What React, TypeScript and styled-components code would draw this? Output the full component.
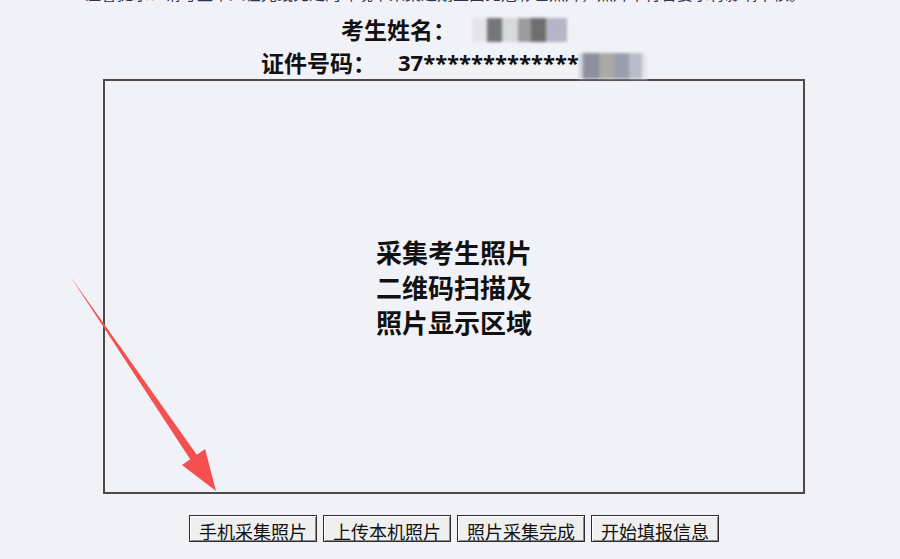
import React from "react";
import styled, { createGlobalStyle } from "styled-components";

const Global = createGlobalStyle`
  html, body { margin: 0; padding: 0; background: #f1f2f8; overflow: hidden; }
  body { font-family: "Noto Sans CJK SC", "Noto Sans", sans-serif; }
`;

const Page = styled.div`
  position: relative;
  box-sizing: border-box;
  width: 900px;
  height: 559px;
  padding-left: 8px;
  display: flex;
  flex-direction: column;
  align-items: center;
`;

const Notice = styled.div`
  margin-top: -25px;
  height: 38px;
  line-height: 36px;
  font-size: 16px;
  color: #2b3550;
  white-space: nowrap;
  margin-right: 18px;
`;

const InfoLine = styled.div`
  height: 33px;
  line-height: 33px;
  font-size: 23px;
  font-weight: 700;
  color: #111;
  display: flex;
  align-items: center;
  white-space: nowrap;
`;

const Label = styled.span<{ $gap?: number }>`
  margin-right: ${(p) => p.$gap ?? 0}px;
`;

const Digits = styled.span`
  font-family: "Open Sans", "Noto Sans", sans-serif;
  font-size: 22px;
  font-weight: 700;
`;

const Blur = styled.span<{ $w: number; $h: number; $bg: string; $dy?: number }>`
  display: inline-block;
  width: ${(p) => p.$w}px;
  height: ${(p) => p.$h}px;
  background: ${(p) => p.$bg};
  filter: blur(1.6px);
  transform: translateY(${(p) => p.$dy ?? 0}px);
`;

const PhotoArea = styled.div`
  box-sizing: border-box;
  width: 702px;
  height: 415px;
  border: 2px solid #4b4b4d;
  display: flex;
  align-items: center;
  justify-content: center;
  text-align: center;
  font-size: 26px;
  font-weight: 700;
  line-height: 35px;
  color: #111;
`;

const ButtonRow = styled.div`
  margin-top: 21px;
  display: flex;
  gap: 6px;
`;

const Button = styled.button`
  box-sizing: border-box;
  width: 128px;
  height: 27px;
  padding: 4px 0 0;
  font-family: "Noto Sans CJK SC", sans-serif;
  font-size: 18px;
  line-height: 20px;
  color: #111;
  background: #efefef;
  border: 1px solid #2e2e2e;
  box-shadow: inset 1px 1px 0 #ffffff, inset -1px -1px 0 #8a8a8a;
`;

const ArrowSvg = styled.svg`
  position: absolute;
  left: 0;
  top: 0;
  pointer-events: none;
`;

const nameBlur =
  "linear-gradient(90deg, #e4e4ea 0 16%, #75767a 16% 32%, #d8d9de 32% 48%, #9c9ba0 48% 62%, #6f6d6e 62% 78%, #b2b6c6 78% 100%)";
const idBlur =
  "linear-gradient(90deg, #d2d3da 0 6%, #8b8f9e 6% 30%, #aaa9a5 30% 52%, #999eac 52% 74%, #b9bcc8 74% 92%, #e5e6ec 92% 100%)";

export default function App() {
  return (
    <>
      <Global />
      <Page>
        <Notice>
          温馨提示：请考生本人在光线充足的环境下采集近期正面免冠彩色照片，照片不符合要求将影响审核。
        </Notice>
        <InfoLine>
          <Label $gap={16}>考生姓名：</Label>
          <Blur $w={95} $h={24} $bg={nameBlur} />
        </InfoLine>
        <InfoLine>
          <Label $gap={22}>证件号码：</Label>
          <Digits>37*************</Digits>
          <Blur $w={68} $h={26} $bg={idBlur} $dy={3} />
        </InfoLine>
        <PhotoArea>
          采集考生照片
          <br />
          二维码扫描及
          <br />
          照片显示区域
        </PhotoArea>
        <ButtonRow>
          <Button>手机采集照片</Button>
          <Button>上传本机照片</Button>
          <Button>照片采集完成</Button>
          <Button>开始填报信息</Button>
        </ButtonRow>
        <ArrowSvg width="900" height="559" viewBox="0 0 900 559">
          <polygon
            points="70,276 196.8,454.8 205.1,449.1 216,491 181.9,464.9 190.2,459.2"
            fill="#f45050"
          />
        </ArrowSvg>
      </Page>
    </>
  );
}
